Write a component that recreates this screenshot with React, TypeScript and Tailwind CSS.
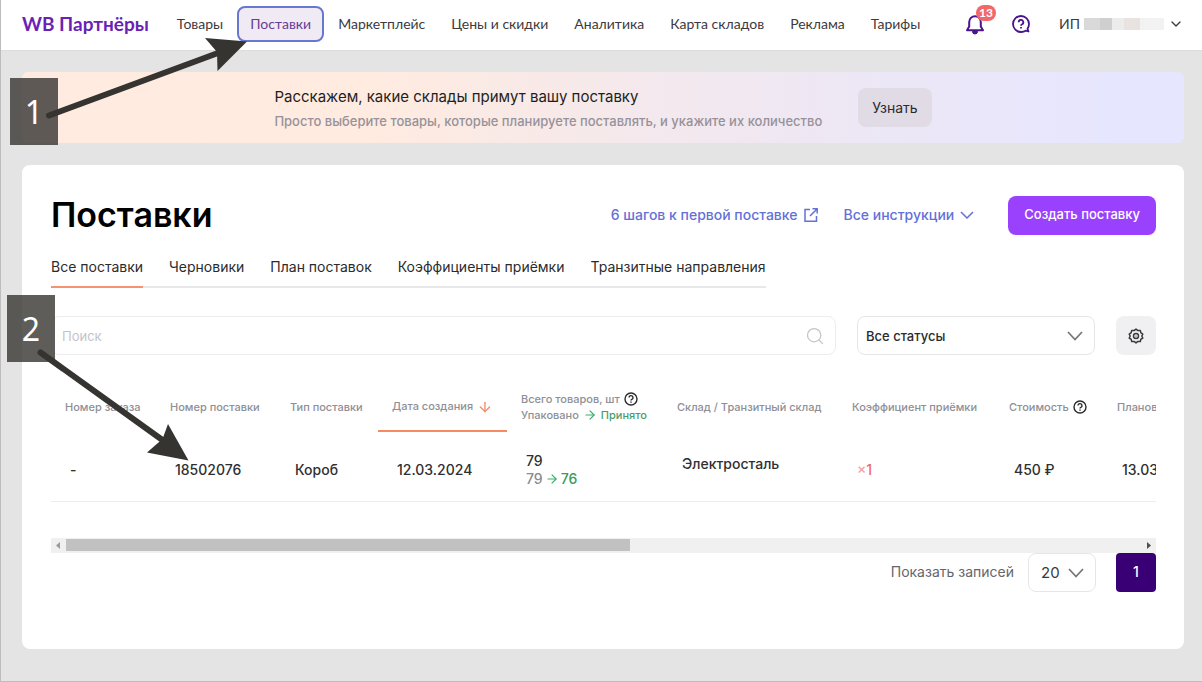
import type { ReactNode } from "react";
import { ArrowDown, ArrowRight, ChevronDown, Search } from "lucide-react";

const NAV_BEFORE = ["Товары"];
const NAV_AFTER = [
  "Маркетплейс",
  "Цены и скидки",
  "Аналитика",
  "Карта складов",
  "Реклама",
  "Тарифы",
];

const TABS = [
  "Все поставки",
  "Черновики",
  "План поставок",
  "Коэффициенты приёмки",
  "Транзитные направления",
];

function NavLink({ children, active = false }: { children: ReactNode; active?: boolean }) {
  return (
    <a
      href="#"
      className={
        active
          ? "flex h-9 items-center rounded-lg border-2 border-[#6878d0] bg-[#f0eaf5] px-[11px] text-[#6a3d94]"
          : "flex h-9 items-center px-3"
      }
    >
      {children}
    </a>
  );
}

function HelpIcon() {
  return (
    <svg width="14" height="14" viewBox="0 0 14 14" fill="none" stroke="#2b2b2e" aria-hidden="true">
      <circle cx="7" cy="7" r="6" strokeWidth="1.4" />
      <path d="M5 5.6a2 2 0 1 1 2.9 1.8c-.6.3-.9.6-.9 1.2" strokeWidth="1.4" />
      <path d="M7 9.6v1.2" strokeWidth="1.4" />
    </svg>
  );
}

function GearIcon() {
  return (
    <svg width="16" height="16" viewBox="0 0 16 16" fill="none" stroke="#3a3a3d" aria-hidden="true">
      <path
        d="M8 1.1 9.9 2.6l2.4-.2.5 2.3 2 1.4L13.8 8l1 2-2 1.3-.5 2.3-2.4-.2L8 14.9l-1.9-1.5-2.4.2-.5-2.3-2-1.3 1-2-1-1.9 2-1.4.5-2.3 2.4.2z"
        strokeWidth="1.5"
        strokeLinejoin="round"
      />
      <circle cx="8" cy="8" r="2.5" strokeWidth="1.4" />
      <circle cx="8" cy="8" r=".6" fill="#3a3a3d" stroke="none" />
    </svg>
  );
}

function Header() {
  return (
    <header className="flex h-[51px] items-center border-b border-[#dcdcdc] bg-white pr-[18px] pb-0.5 pl-[21px] font-['Lato',sans-serif]">
      <a href="#" className="text-[19px] font-bold text-[#6b1fb5]">
        WB Партнёры
      </a>
      <nav className="ml-4 flex items-center gap-0.5 text-sm text-[#3c3a40]">
        {NAV_BEFORE.map((item) => (
          <NavLink key={item}>{item}</NavLink>
        ))}
        <NavLink active>Поставки</NavLink>
        {NAV_AFTER.map((item) => (
          <NavLink key={item}>{item}</NavLink>
        ))}
      </nav>
      <div className="ml-auto flex items-center">
        <button type="button" aria-label="Уведомления" className="relative">
          <svg width="20" height="22" viewBox="0 0 20 22" fill="none" stroke="#4a148c" strokeWidth="2">
            <path d="M2 17.2h16l-2.2-3.6V9a5.8 5.8 0 0 0-11.6 0v4.6z" strokeLinejoin="round" />
            <path d="M7.5 18.5a2.5 2.5 0 0 0 5 0z" fill="#4a148c" strokeWidth="1" />
          </svg>
          <span className="absolute -top-2 left-[11px] flex h-4 w-5 items-center justify-center rounded-full bg-[#f0686a] text-xs font-bold text-white">
            13
          </span>
        </button>
        <button type="button" aria-label="Помощь" className="ml-[26px]">
          <svg width="20" height="20" viewBox="0 0 20 20" fill="none" stroke="#4a148c" strokeWidth="1.8">
            <path d="M10 18a8 8 0 1 1 8-8c0 2-.6 3.600-1.500 4.800l1 2.700-2.800-.8A8 8 0 0 1 10 18z" strokeLinejoin="round" />
            <path d="M7.7 8.2a2.3 2.3 0 1 1 3.400 2c-.8.4-1.100.8-1.100 1.500" />
            <path d="M10 13v1.600" />
          </svg>
        </button>
        <button type="button" className="ml-7 flex items-center text-sm text-[#3c3a40]">
          ИП
          <span className="ml-1 flex h-3 w-20">
            <span className="w-4 bg-[#d9d9d9]" />
            <span className="w-3 bg-[#cfcfcf]" />
            <span className="w-3 bg-[#ececec]" />
            <span className="w-4 bg-[#e8e2e0]" />
            <span className="grow bg-[#f2f2f2]" />
          </span>
          <ChevronDown size={16} strokeWidth={2} className="ml-1" />
        </button>
      </div>
    </header>
  );
}

function Banner() {
  return (
    <section className="flex h-[71px] items-center justify-center gap-9 rounded-md bg-linear-to-r from-[#ffebe0] from-30% via-[#f1e8f0] via-60% to-[#e6e6ff] to-95%">
      <div className="pt-0.5 leading-6">
        <h2 className="text-[15px] text-[#1f1f22]">Расскажем, какие склады примут вашу поставку</h2>
        <p className="text-[13px] font-medium text-[#979299]">
          Просто выберите товары, которые планируете поставлять, и укажите их количество
        </p>
      </div>
      <button type="button" className="h-[39px] rounded-lg bg-[#e1dbe6] px-[14px] text-sm text-[#2b2b2e]">
        Узнать
      </button>
    </section>
  );
}

function SuppliesTable() {
  return (
    <div className="mt-7">
      <div className="overflow-hidden">
        <table className="w-[1260px] table-fixed border-collapse text-left">
          <colgroup>
            <col className="w-[105px]" />
            <col className="w-[120px]" />
            <col className="w-[102px]" />
            <col className="w-[129px]" />
            <col className="w-[156px]" />
            <col className="w-[175px]" />
            <col className="w-[157px]" />
            <col className="w-[108px]" />
            <col />
          </colgroup>
          <thead className="text-[11px] text-[#8f8f96]">
            <tr className="h-12 *:px-[14px] *:font-medium *:whitespace-nowrap">
              <th>Номер заказа</th>
              <th>Номер поставки</th>
              <th>Тип поставки</th>
              <th className="border-b-2 border-[#f58a63]">
                <span className="flex items-center gap-1">
                  Дата создания
                  <ArrowDown size={16} strokeWidth={2} className="text-[#f58a63]" />
                </span>
              </th>
              <th>
                <span className="flex items-center gap-1 leading-4">
                  Всего товаров, шт <HelpIcon />
                </span>
                <span className="flex items-center gap-1 leading-4">
                  Упаковано
                  <ArrowRight size={14} strokeWidth={2} className="text-[#3aae68]" />
                  <span className="text-[#4a9d6c]">Принято</span>
                </span>
              </th>
              <th>Склад / Транзитный склад</th>
              <th>Коэффициент приёмки</th>
              <th>
                <span className="flex items-center gap-1">
                  Стоимость <HelpIcon />
                </span>
              </th>
              <th>Плановая дата</th>
            </tr>
          </thead>
          <tbody className="text-sm font-medium text-[#2f2f33]">
            <tr className="h-[70px] border-b border-[#ededf0] *:px-[19px] *:pt-2 *:whitespace-nowrap">
              <td>-</td>
              <td>18502076</td>
              <td>Короб</td>
              <td>12.03.2024</td>
              <td className="leading-[18px]">
                79
                <span className="flex items-center gap-0.5 text-[#8a8a90]">
                  79
                  <ArrowRight size={14} strokeWidth={2} className="text-[#3aae68]" />
                  <span className="text-[#3a9a62]">76</span>
                </span>
              </td>
              <td className="pb-3">Электросталь</td>
              <td className="text-[#ee6a6e]">
                <span className="text-[#f4a0a4]">×</span>1
              </td>
              <td>450 ₽</td>
              <td>13.03.2024</td>
            </tr>
          </tbody>
        </table>
      </div>

      {/* Horizontal scroll track */}
      <div className="mt-9 flex h-[15px] items-center bg-[#f0f0f0] px-[5px]">
        <svg width="5" height="7" viewBox="0 0 5 7" fill="#9a9a9a" aria-hidden="true">
          <path d="M4 0v7L0 3.5z" />
        </svg>
        <div className="ml-[5px] h-3 w-[51.5%] bg-[#c1c1c1]" />
        <svg width="5" height="7" viewBox="0 0 5 7" fill="#505050" className="ml-auto" aria-hidden="true">
          <path d="M1 0v7l4-3.5z" />
        </svg>
      </div>
    </div>
  );
}

function Supplies() {
  return (
    <main className="mt-[22px] rounded-lg bg-white pt-[30px] pr-7 pb-[57px] pl-[29px]">
      <div className="flex h-10 items-center">
        <h1 className="text-[34px] leading-10 font-semibold text-black">Поставки</h1>
        <a href="#" className="ml-auto flex items-center gap-1.5 text-sm font-medium text-[#6470d8]">
          6 шагов к первой поставке
          <svg width="14" height="14" viewBox="0 0 14 14" fill="none" stroke="currentColor" strokeWidth="1.5" aria-hidden="true">
            <path d="M6 1.5H1v11.700h11.500V8" />
            <path d="M8.500.8h4.700v4.700M13 1 6 8" />
          </svg>
        </a>
        <button type="button" className="ml-[26px] flex items-center gap-1.5 text-sm font-medium text-[#6470d8]">
          Все инструкции
          <svg width="14" height="8" viewBox="0 0 14 8" fill="none" stroke="currentColor" strokeWidth="1.5" aria-hidden="true">
            <path d="m1 1 6 6 6-6" />
          </svg>
        </button>
        <button type="button" className="ml-[34px] h-[39px] rounded-lg bg-[#9a41fe] px-4 text-[13px] font-medium text-white">
          Создать поставку
        </button>
      </div>

      <nav className="mt-5 flex w-fit gap-[26px] border-b-2 border-[#e8e8ea] text-sm text-[#2b2b2e]">
        {TABS.map((tab, i) => (
          <a
            key={tab}
            href="#"
            className={
              i === 0
                ? "-mb-0.5 border-b-2 border-[#f79271] pt-[3px] pb-[10px] leading-[18px]"
                : "pt-[3px] pb-[10px] leading-[18px]"
            }
          >
            {tab}
          </a>
        ))}
      </nav>

      <div className="mt-7 flex gap-[21px]">
        <label className="flex h-[39px] grow items-center rounded-lg border border-[#ededf0] px-[10px]">
          <input
            type="search"
            aria-label="Поиск"
            placeholder="Поиск"
            className="grow pt-0.5 text-[13px] outline-none placeholder:text-[#c4c4c8]"
          />
          <Search size={20} strokeWidth={1.5} className="text-[#c4c4c8]" />
        </label>
        <div className="relative">
          <select
            aria-label="Статус"
            className="h-[39px] w-[238px] appearance-none rounded-lg border border-[#e6e6ea] bg-white px-2 pt-0.5 text-[13px] font-medium text-[#2b2b2e]"
          >
            <option>Все статусы</option>
          </select>
          <svg width="16" height="10" viewBox="0 0 16 10" fill="none" stroke="#77777c" strokeWidth="1.8" className="pointer-events-none absolute top-[15px] right-3" aria-hidden="true">
            <path d="m1 1 7 7.5L15 1" />
          </svg>
        </div>
        <button
          type="button"
          aria-label="Настройки"
          className="flex h-[39px] w-10 items-center justify-center rounded-lg bg-[#f0f0f2]"
        >
          <GearIcon />
        </button>
      </div>

      <SuppliesTable />

      <div className="flex items-center justify-end">
        <label htmlFor="page-size" className="mr-[14px] text-sm text-[#66666c]">
          Показать записей
        </label>
        <div className="relative mr-5">
          <select
            id="page-size"
            className="block h-[39px] w-[68px] appearance-none rounded-lg border border-[#e6e6ea] bg-white px-3 pt-0.5 text-[15px] text-[#3a3a3d]"
          >
            <option>20</option>
          </select>
          <svg width="16" height="10" viewBox="0 0 16 10" fill="none" stroke="#77777c" strokeWidth="1.8" className="pointer-events-none absolute top-[15px] right-3" aria-hidden="true">
            <path d="m1 1 7 7.5L15 1" />
          </svg>
        </div>
        <button type="button" className="h-[39px] w-10 rounded bg-[#390075] text-sm font-medium text-white">
          1
        </button>
      </div>
    </main>
  );
}

/** Numbered callouts with arrows, laid over the page */
function Callouts() {
  return (
    <div className="pointer-events-none">
      <div className="absolute top-[78px] left-[9px] flex h-[67px] w-12 items-center justify-center bg-[#363431]/80 font-['Noto_Sans',sans-serif] text-[32px] text-white">
        1
      </div>
      <div className="absolute top-[295px] left-[6px] flex h-[67px] w-12 items-center justify-center bg-[#363431]/80 font-['Noto_Sans',sans-serif] text-[32px] text-white">
        2
      </div>
      <svg width="260" height="480" viewBox="1 0 260 480" fill="#363431" className="absolute top-0 left-0" aria-hidden="true">
        <path d="M49 115.5 218 53" stroke="#363431" strokeWidth="6" strokeLinecap="round" />
        <path d="m247 41.5-42-3.5 12 14 .5 19z" />
        <path d="m40.5 352.5 124 89" stroke="#363431" strokeWidth="6" strokeLinecap="round" />
        <path d="m188.5 460.5-20.5-36.5-5.5 15-15.5 13.5z" />
      </svg>
    </div>
  );
}

export default function App() {
  return (
    <div className="relative min-h-screen overflow-hidden border-b border-l border-[#bdbdbd] bg-[#e4e4e4] font-['Inter',sans-serif]">
      <Header />
      <div className="pt-[21px] pr-[18px] pb-8 pl-[21px]">
        <Banner />
        <Supplies />
      </div>
      <Callouts />
    </div>
  );
}
